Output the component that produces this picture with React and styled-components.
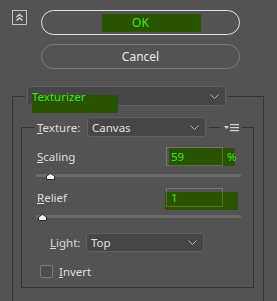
import React from 'react';
import styled, { createGlobalStyle } from 'styled-components';

const GlobalStyle = createGlobalStyle`
  html, body {
    margin: 0;
    padding: 0;
    background: #535353;
    overflow: hidden;
  }
  body {
    font-family: "Noto Sans", "Open Sans", sans-serif;
    font-size: 11.5px;
    color: #dedede;
  }
`;

const Panel = styled.div`
  width: 277px;
  height: 301px;
  overflow: hidden;
`;

const Top = styled.div`
  display: flex;
  align-items: flex-start;
  padding: 10px 0 0 12px;
`;

const CollapseButton = styled.button`
  box-sizing: border-box;
  width: 15px;
  height: 15px;
  padding: 0;
  margin-right: 14px;
  border: 1px solid #c4c4c4;
  background: #505050;
  display: flex;
  align-items: center;
  justify-content: center;
`;

const ButtonStack = styled.div`
  display: flex;
  flex-direction: column;
  gap: 9px;
  width: 199px;
`;

const PillButton = styled.button`
  position: relative;
  box-sizing: border-box;
  height: 25px;
  padding: 0;
  border-radius: 13px;
  border: ${(p) => (p.$primary ? '1.5px solid #e4e4e4' : '1px solid #7b7b7b')};
  background: transparent;
  color: ${(p) => (p.$primary ? '#3ee61f' : '#e8e8e8')};
  font: inherit;
  font-size: 12px;
  display: flex;
  align-items: center;
  justify-content: center;
`;

// green marker boxes drawn over the dialog
const Highlight = styled.span`
  position: absolute;
  left: ${(p) => p.$x}px;
  top: ${(p) => p.$y}px;
  width: ${(p) => p.$w}px;
  height: ${(p) => p.$h}px;
  background: #295300;
  z-index: 0;
  pointer-events: none;
`;

const Text = styled.span`
  position: relative;
  z-index: 1;
  color: ${(p) => (p.$marked ? '#3ee61f' : 'inherit')};
`;

const OuterGroup = styled.fieldset`
  box-sizing: border-box;
  width: 252px;
  margin: 17px 0 0 12px;
  padding: 11px 0 40px 0;
  border: 1px solid #353535;
  min-inline-size: 0;
`;

const OuterLegend = styled.legend`
  margin-left: 12px;
  padding: 0 2px;
  display: flex;
`;

const InnerGroup = styled.fieldset`
  box-sizing: border-box;
  width: 233px;
  margin: 0 0 0 8px;
  padding: 0 0 9px 0;
  border: 1px solid #353535;
  min-inline-size: 0;
`;

const InnerLegend = styled.legend`
  margin-left: 13px;
  padding: 0 3px 0 2px;
  display: flex;
  align-items: center;
`;

const LegendLabel = styled.span`
  width: 50px;
`;

const LegendRule = styled.span`
  width: 11px;
  height: 1px;
  background: #353535;
  margin: 0 4px 0 3px;
`;

const Select = styled.div`
  position: relative;
  box-sizing: border-box;
  width: ${(p) => p.$w}px;
  height: ${(p) => p.$h}px;
  padding: 0 6px 0 4px;
  display: flex;
  align-items: center;
  justify-content: space-between;
  background: #464646;
  border: 1px solid #606060;
  border-radius: 3px;
  color: #e2e2e2;
`;

const FieldRow = styled.div`
  position: relative;
  display: grid;
  grid-template-columns: 144px 57px auto;
  align-items: center;
  height: 19px;
  margin-top: ${(p) => p.$mt}px;
`;

const FieldLabel = styled.span`
  padding-left: 15px;
`;

const NumberBox = styled.div`
  position: relative;
  z-index: 1;
  box-sizing: border-box;
  height: 19px;
  padding-left: 4px;
  display: flex;
  align-items: center;
  border: 1px solid rgba(255, 255, 255, 0.2);
  color: #3ee61f;
`;

const Unit = styled.span`
  position: relative;
  z-index: 1;
  margin-left: 4px;
  color: #3ee61f;
`;

const Slider = styled.div`
  position: relative;
  height: 10px;
  margin: 4px 12px 0 14px;
`;

const Track = styled.div`
  position: absolute;
  left: 0;
  right: 0;
  top: 4px;
  height: 3px;
  border-radius: 1px;
  background: #6b6b6b;
`;

const Thumb = styled.svg`
  position: absolute;
  top: 3px;
  left: ${(p) => p.$left}px;
`;

const LightRow = styled.div`
  display: flex;
  align-items: center;
  margin-top: 12px;
  padding-left: 28px;
`;

const LightLabel = styled.span`
  width: 36px;
`;

const CheckRow = styled.label`
  display: flex;
  align-items: center;
  gap: 6px;
  height: 13px;
  margin-top: 13px;
  padding-left: 18px;
`;

const Box = styled.span`
  box-sizing: border-box;
  width: 13px;
  height: 13px;
  border: 1px solid #7a7a7a;
  border-radius: 2px;
  background: #4c4c4c;
`;

const Chevron = () => (
  <svg width="9" height="5" viewBox="0 0 9 5">
    <polyline points="0.5,0.5 4.5,4.5 8.5,0.5" fill="none" stroke="#b4b4b4" strokeWidth="1" />
  </svg>
);

const SliderThumb = ({ left }) => (
  <Thumb $left={left} width="9" height="7" viewBox="0 0 9 7">
    <path d="M0.5 6.5 V3 L4.5 0.5 L8.5 3 V6.5 Z" fill="#f4f4f4" stroke="#2a2a2a" strokeWidth="1" />
  </Thumb>
);

function App() {
  return (
    <Panel>
      <GlobalStyle />
      <Top>
        <CollapseButton>
          <svg width="13" height="13" viewBox="0 0 13 13">
            <polyline points="3.5,6 6.5,3.5 9.5,6" fill="none" stroke="#dcdcdc" strokeWidth="1.4" />
            <polyline points="3.5,9.5 6.5,7 9.5,9.5" fill="none" stroke="#dcdcdc" strokeWidth="1.4" />
          </svg>
        </CollapseButton>
        <ButtonStack>
          <PillButton $primary>
            <Highlight $x={60} $y={3} $w={99} $h={18} />
            <Text>OK</Text>
          </PillButton>
          <PillButton>Cancel</PillButton>
        </ButtonStack>
      </Top>

      <OuterGroup>
        <OuterLegend>
          <Select $w={199} $h={20}>
            <Highlight $x={4} $y={8} $w={86} $h={18} />
            <Text $marked>Texturizer</Text>
            <Chevron />
          </Select>
        </OuterLegend>

        <InnerGroup>
          <InnerLegend>
            <LegendLabel><u>T</u>exture:</LegendLabel>
            <Select $w={119} $h={20}>
              <span>Canvas</span>
              <Chevron />
            </Select>
            <LegendRule />
            <svg width="15" height="9" viewBox="0 0 15 9">
              <polygon points="0,3 5,3 2.5,6" fill="#d4d4d4" />
              <rect x="6" y="1" width="9" height="1.2" fill="#d4d4d4" />
              <rect x="6" y="4" width="9" height="1.2" fill="#d4d4d4" />
              <rect x="6" y="7" width="9" height="1.2" fill="#d4d4d4" />
            </svg>
          </InnerLegend>

          <FieldRow $mt={10}>
            <Highlight $x={147} $y={1} $w={66} $h={18} />
            <FieldLabel><u>S</u>caling</FieldLabel>
            <NumberBox>59</NumberBox>
            <Unit>%</Unit>
          </FieldRow>
          <Slider>
            <Track />
            <SliderThumb left={10} />
          </Slider>

          <FieldRow $mt={8}>
            <Highlight $x={143} $y={4} $w={73} $h={18} />
            <FieldLabel><u>R</u>elief</FieldLabel>
            <NumberBox>1</NumberBox>
          </FieldRow>
          <Slider>
            <Track />
            <SliderThumb left={2} />
          </Slider>

          <LightRow>
            <LightLabel><u>L</u>ight:</LightLabel>
            <Select $w={118} $h={19}>
              <span>Top</span>
              <Chevron />
            </Select>
          </LightRow>

          <CheckRow>
            <Box />
            <span><u>I</u>nvert</span>
          </CheckRow>
        </InnerGroup>
      </OuterGroup>
    </Panel>
  );
}

export default App;
